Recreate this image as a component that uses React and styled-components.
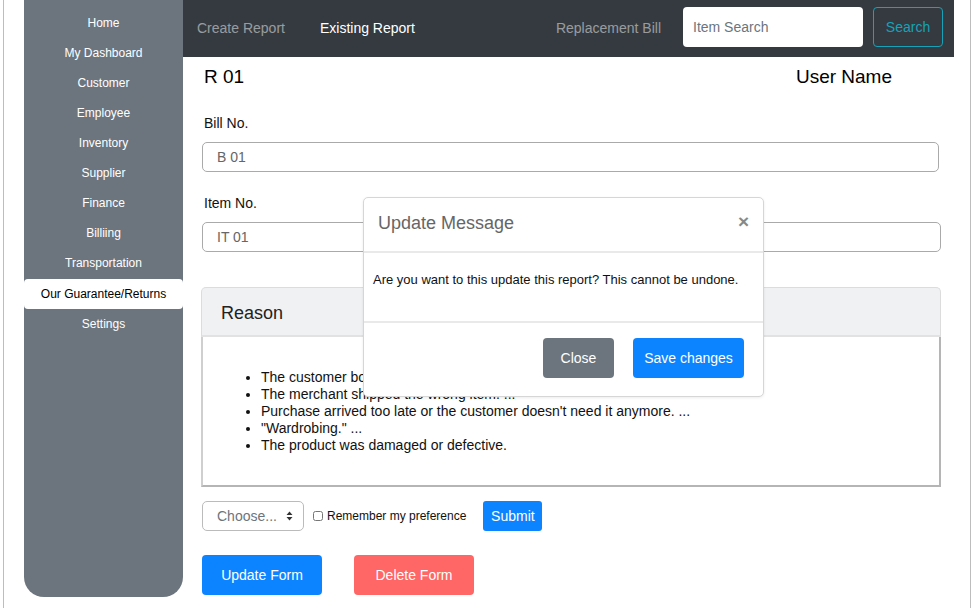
import React from "react";
import styled, { createGlobalStyle } from "styled-components";

const GlobalStyle = createGlobalStyle`
  body {
    margin: 0;
    font-family: "Liberation Sans", Arial, sans-serif;
    background: #fff;
  }
`;

// frame
const Frame = styled.div`
  position: relative;
  display: flex;
  margin-left: 3px;
  width: 968px;
  height: 608px;
  padding-left: 20px;
  box-sizing: border-box;
  border-left: 1px solid #bdbdbd;
  border-right: 1px solid #bdbdbd;
`;

// sidebar
const Sidebar = styled.nav`
  display: flex;
  flex-direction: column;
  flex: 0 0 159px;
  height: 597px;
  padding-top: 8px;
  box-sizing: border-box;
  background: #6c757d;
  border-radius: 0 0 20px 20px;
`;

const SideItem = styled.div`
  height: 30px;
  line-height: 30px;
  text-align: center;
  font-size: 12px;
  color: ${(p) => (p.$active ? "#000" : "#fff")};
  background: ${(p) => (p.$active ? "#fff" : "transparent")};
  border-radius: ${(p) => (p.$active ? "4px" : "0")};
  margin-top: ${(p) => (p.$active ? "1px" : "0")};
`;

// main column
const Main = styled.div`
  flex: 0 0 770px;
  display: flex;
  flex-direction: column;
`;

const TopBar = styled.header`
  display: flex;
  align-items: center;
  height: 57px;
  box-sizing: border-box;
  padding: 0 11px 3px 14px;
  background: #343a40;
`;

const NavLink = styled.span`
  font-size: 14px;
  padding-top: 2px;
  color: ${(p) => (p.$active ? "#fff" : "rgba(255,255,255,0.5)")};
  margin-right: ${(p) => p.$gap || 0}px;
  margin-left: ${(p) => (p.$push ? "auto" : "0")};
`;

const SearchInput = styled.div`
  width: 180px;
  height: 40px;
  box-sizing: border-box;
  padding-left: 10px;
  display: flex;
  align-items: center;
  font-size: 14px;
  color: #6c757d;
  background: #fff;
  border-radius: 4px;
  margin-right: 10px;
`;

const OutlineButton = styled.div`
  width: 70px;
  height: 40px;
  box-sizing: border-box;
  display: flex;
  align-items: center;
  justify-content: center;
  font-size: 14px;
  color: #17a2b8;
  border: 1px solid #17a2b8;
  border-radius: 4px;
`;

const Content = styled.div`
  display: flex;
  flex-direction: column;
  padding: 0 13px 0 19px;
`;

const TitleRow = styled.div`
  display: flex;
  justify-content: space-between;
  margin-top: 9px;
  padding: 0 49px 0 2px;
  font-size: 19px;
  line-height: 22px;
  color: #000;
`;

const Label = styled.div`
  font-size: 14px;
  line-height: 17px;
  margin: ${(p) => p.$top}px 0 10px 2px;
  color: #111;
`;

const TextField = styled.div`
  height: 30px;
  box-sizing: border-box;
  display: flex;
  align-items: center;
  padding-left: 14px;
  font-size: 14px;
  color: #666;
  border: 1px solid #aaa;
  border-radius: 5px;
  margin-right: ${(p) => p.$right || 0}px;
`;

const Card = styled.section`
  margin-top: 35px;
  margin-left: -1px;
  width: 740px;
`;

const CardHeader = styled.div`
  height: 50px;
  box-sizing: border-box;
  display: flex;
  align-items: center;
  padding: 4px 0 0 19px;
  font-size: 18px;
  color: #222;
  background: #f0f1f3;
  border: 1px solid #dcdcdc;
  border-bottom: 2px solid #e2e2e2;
  border-radius: 5px 5px 0 0;
`;

const CardBody = styled.div`
  height: 150px;
  box-sizing: border-box;
  padding-top: 32px;
  border-left: 2px solid #cfcfcf;
  border-right: 2px solid #b5b5b5;
  border-bottom: 2px solid #b5b5b5;
`;

const ReasonList = styled.ul`
  margin: 0;
  padding-left: 58px;
  font-size: 14px;
  line-height: 17px;
  color: #111;
`;

const FormRow = styled.div`
  display: flex;
  align-items: center;
  margin-top: 14px;
  height: 30px;
`;

const SelectBox = styled.div`
  width: 102px;
  height: 30px;
  box-sizing: border-box;
  display: flex;
  align-items: center;
  justify-content: space-between;
  padding: 0 10px 0 14px;
  font-size: 14px;
  color: #6c757d;
  border: 1px solid #bbb;
  border-radius: 5px;
`;

const Check = styled.label`
  display: flex;
  align-items: center;
  font-size: 12px;
  color: #111;
  margin-left: 9px;
  margin-right: 17px;

  input {
    margin: 0 4px 0 0;
    width: 10px;
    height: 10px;
  }
`;

const Button = styled.div`
  display: flex;
  align-items: center;
  justify-content: center;
  width: ${(p) => p.$w}px;
  height: ${(p) => p.$h || 40}px;
  margin-left: ${(p) => p.$ml || 0}px;
  font-size: 14px;
  color: #fff;
  background: ${(p) => p.$bg};
  border-radius: ${(p) => p.$r || 4}px;
  box-sizing: border-box;
`;

const ButtonRow = styled.div`
  display: flex;
  margin-top: 24px;
`;

// modal
const Modal = styled.div`
  position: absolute;
  left: 359px;
  top: 197px;
  width: 401px;
  height: 200px;
  box-sizing: border-box;
  display: flex;
  flex-direction: column;
  background: #fff;
  border: 1px solid #d6d6d6;
  border-radius: 5px;
  box-shadow: 0 1px 3px rgba(0, 0, 0, 0.08);
`;

const ModalHeader = styled.div`
  height: 55px;
  box-sizing: border-box;
  display: flex;
  align-items: center;
  justify-content: space-between;
  padding: 0 14px 2px 14px;
  border-bottom: 2px solid #e9e9e9;
`;

const ModalTitle = styled.div`
  font-size: 18px;
  color: #666;
`;

const CloseX = styled.span`
  font-size: 19px;
  font-weight: bold;
  color: #888;
  margin-top: -4px;
`;

const ModalBody = styled.div`
  height: 70px;
  box-sizing: border-box;
  padding: 19px 9px 0;
  font-size: 13px;
  color: #111;
  border-bottom: 2px solid #e9e9e9;
`;

const ModalFooter = styled.div`
  flex: 1;
  display: flex;
  align-items: center;
  justify-content: flex-end;
  padding: 0 19px 3px 0;
`;

const reasons = [
  "The customer bought the wrong item or the item doesn't fit. ...",
  "The merchant shipped the wrong item. ...",
  "Purchase arrived too late or the customer doesn't need it anymore. ...",
  "\"Wardrobing.\" ...",
  "The product was damaged or defective.",
];

const menu = [
  "Home",
  "My Dashboard",
  "Customer",
  "Employee",
  "Inventory",
  "Supplier",
  "Finance",
  "Billiing",
  "Transportation",
  "Our Guarantee/Returns",
  "Settings",
];

const SortArrows = () => (
  <svg width="7" height="10" viewBox="0 0 7 10">
    <path d="M3.5 0.5 L6.5 4 H0.5 Z M3.5 9.5 L0.5 6 H6.5 Z" fill="#333" />
  </svg>
);

export default function App() {
  return (
    <>
      <GlobalStyle />
      <Frame>
        <Sidebar>
          {menu.map((m) => (
            <SideItem key={m} $active={m === "Our Guarantee/Returns"}>
              {m}
            </SideItem>
          ))}
        </Sidebar>

        <Main>
          <TopBar>
            <NavLink $gap={35}>Create Report</NavLink>
            <NavLink $active>Existing Report</NavLink>
            <NavLink $push $gap={22}>Replacement Bill</NavLink>
            <SearchInput>Item Search</SearchInput>
            <OutlineButton>Search</OutlineButton>
          </TopBar>

          <Content>
            <TitleRow>
              <span>R 01</span>
              <span>User Name</span>
            </TitleRow>

            <Label $top={27}>Bill No.</Label>
            <TextField $right={2}>B 01</TextField>

            <Label $top={23}>Item No.</Label>
            <TextField>IT 01</TextField>

            <Card>
              <CardHeader>Reason</CardHeader>
              <CardBody>
                <ReasonList>
                  {reasons.map((r) => (
                    <li key={r}>{r}</li>
                  ))}
                </ReasonList>
              </CardBody>
            </Card>

            <FormRow>
              <SelectBox>
                Choose...
                <SortArrows />
              </SelectBox>
              <Check>
                <input type="checkbox" />
                Remember my preference
              </Check>
              <Button $w={59} $h={30} $bg="#0d84ff" $r={3}>
                Submit
              </Button>
            </FormRow>

            <ButtonRow>
              <Button $w={120} $bg="#0d84ff">Update Form</Button>
              <Button $w={120} $ml={32} $bg="#ff6666">Delete Form</Button>
            </ButtonRow>
          </Content>
        </Main>

        <Modal>
          <ModalHeader>
            <ModalTitle>Update Message</ModalTitle>
            <CloseX>×</CloseX>
          </ModalHeader>
          <ModalBody>
            Are you want to this update this report? This cannot be undone.
          </ModalBody>
          <ModalFooter>
            <Button $w={71} $bg="#6c757d">Close</Button>
            <Button $w={111} $ml={19} $bg="#0d84ff">Save changes</Button>
          </ModalFooter>
        </Modal>
      </Frame>
    </>
  );
}
